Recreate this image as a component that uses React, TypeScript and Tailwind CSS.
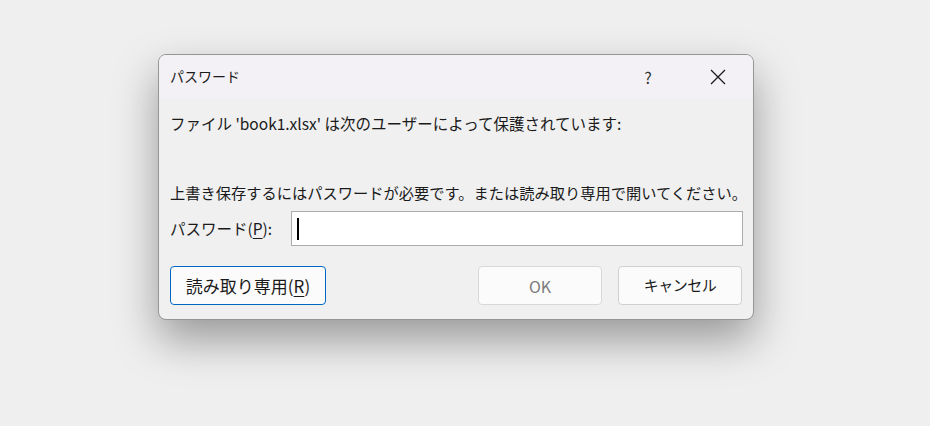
const font = "font-['Yu_Gothic_UI','Noto_Sans_CJK_JP',sans-serif]";

const Underlined = ({ ch }: { ch: string }) => <span className="underline underline-offset-[3px]">{ch}</span>;

export default function App() {
  return (
    <div className={`w-[930px] h-[426px] bg-[#efefef] ${font} text-[15.5px] text-[#1a1a1a] pt-[54px] pl-[158px]`}>
      <div className="w-[596px] h-[266px] rounded-[8px] border border-[#959595] bg-[#f0f0f0] overflow-hidden shadow-[0_20px_44px_rgba(0,0,0,0.36)] flex flex-col">
        {/* title bar */}
        <div className="h-[43px] bg-[#f3f1f6] flex items-center pl-[11px]">
          <span className="text-[14px] flex-1">パスワード</span>
          <span className="w-[70px] text-center text-[16px] text-[#333]">?</span>
          <div className="w-[70px] flex justify-center">
            <svg width="16" height="16" viewBox="0 0 16 16" stroke="#1a1a1a" strokeWidth="1.3">
              <path d="M1 1 L15 15 M15 1 L1 15" />
            </svg>
          </div>
        </div>

        {/* body */}
        <div className="flex flex-col pl-[11px] pr-[10px]">
          <p className="mt-[14px] leading-[22px] whitespace-nowrap">ファイル 'book1.xlsx' は次のユーザーによって保護されています:</p>
          <p className="mt-[47px] leading-[22px] text-[15.25px] whitespace-nowrap">上書き保存するにはパスワードが必要です。または読み取り専用で開いてください。</p>
          <div className="mt-[8px] flex items-center">
            <span className="w-[121px] whitespace-nowrap">
              パスワード(<Underlined ch="P" />):
            </span>
            <div className="flex-1 h-[35px] border border-[#acacac] bg-white flex items-center pl-[5px]">
              <div className="w-[2px] h-[22px] bg-black" />
            </div>
          </div>
          <div className="mt-[20px] flex items-center">
            <button className="w-[156px] h-[39px] rounded-[4px] border border-[#0067c0] bg-[#fbfbfb] text-[17px] whitespace-nowrap">
              読み取り専用(<Underlined ch="R" />)
            </button>
            <div className="flex-1" />
            <button className="w-[124px] h-[39px] rounded-[4px] border border-[#d8d8d8] bg-[#fbfbfb] text-[16px] text-[#7a7a7a]">
              OK
            </button>
            <button className="ml-[16px] mr-[1px] w-[124px] h-[39px] rounded-[4px] border border-[#d0d0d0] bg-[#fbfbfb] text-[15px] tracking-[-0.5px]">
              キャンセル
            </button>
          </div>
        </div>
      </div>
    </div>
  );
}
